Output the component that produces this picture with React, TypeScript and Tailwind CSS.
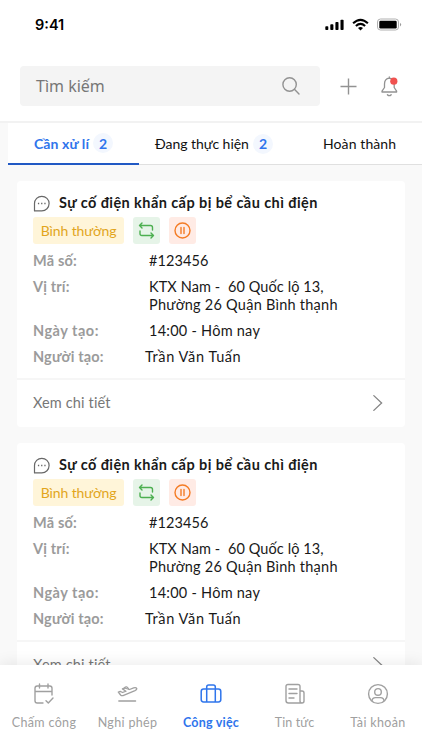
import type { ReactNode } from "react";

const tickets = [
  { id: "first", code: "#123456" },
  { id: "second", code: "#123456" },
];

const navItems = [
  { label: "Chấm công", icon: <CalendarIcon />, width: "w-[88px]", tracking: "tracking-[0.35px]" },
  { label: "Nghỉ phép", icon: <PlaneIcon />, width: "w-[79px]", tracking: "tracking-[0.35px]" },
  { label: "Công việc", icon: <WorkIcon />, width: "w-[88px]", tracking: "tracking-[0.2px]", active: true },
  { label: "Tin tức", icon: <NewsIcon />, width: "w-[79px]", tracking: "tracking-[0.1px]" },
  { label: "Tài khoản", icon: <UserIcon />, width: "w-[88px]", tracking: "tracking-[0.35px]" },
];

function CalendarIcon() {
  return (
    <svg width="20" height="22" viewBox="0 0 20 22" fill="none" stroke="currentColor" strokeWidth="1.4" strokeLinecap="round" strokeLinejoin="round">
      <path d="M9 20H3.2Q1 20 1 17.8V5.2Q1 3 3.2 3H15.8Q18 3 18 5.2V12M1 8.5H18M5.5 1V5M14 1V5M12 17.7L14.3 20L19 15" />
    </svg>
  );
}

function PlaneIcon() {
  return (
    <svg width="21" height="22" viewBox="0 0 21 22" fill="none" stroke="currentColor" strokeWidth="1.3" strokeLinecap="round" strokeLinejoin="round">
      <path d="M1.3 9L3.2 8.4L5.6 9.5L9 8.2L5.4 5.9L7.4 5L12.6 6.5L16.6 4.9Q19 4.2 19.8 5.5Q20 6.8 18 7.7L6 12.6Q4.6 13 3.6 12Z" />
      <path d="M7.4 5Q9.6 2.2 11.6 6M1.8 18H18.6" />
    </svg>
  );
}

function WorkIcon() {
  return (
    <svg width="22" height="22" viewBox="0 0 22 22" fill="none" stroke="currentColor" strokeWidth="1.5" strokeLinejoin="round">
      <rect x="1.2" y="6" width="19.6" height="13" rx="2.4" />
      <path d="M6.7 19V4Q6.7 2 8.7 2H13.3Q15.3 2 15.3 4V19" />
    </svg>
  );
}

function NewsIcon() {
  return (
    <svg width="20" height="22" viewBox="0 0 20 22" fill="none" stroke="currentColor" strokeWidth="1.4" strokeLinecap="round" strokeLinejoin="round">
      <path d="M15 8V3.5Q15 1.5 13 1.5H3Q1 1.5 1 3.5V17.5Q1 20 3.5 20H17Q19 20 19 18V10Q19 8 17 8H15V18Q15 20 17 20M4 6H12M4 10.5H12M4 15H9" />
    </svg>
  );
}

function UserIcon() {
  return (
    <svg width="22" height="22" viewBox="0 0 22 22" fill="none" stroke="currentColor" strokeWidth="1.4">
      <circle cx="11" cy="11" r="9.4" />
      <circle cx="11" cy="8.9" r="3.3" />
      <path d="M5 18Q5.2 14.6 8.5 14.6H13.5Q16.8 14.6 17 18" />
    </svg>
  );
}

function StatusBar() {
  return (
    <div className="flex h-[66px] items-start justify-between pt-4 pr-5 pl-[35px]">
      <span className="font-[Inter,sans-serif] text-[14.5px] leading-[18px] font-semibold text-black">9:41</span>
      <svg className="mt-0.5" width="77" height="14" viewBox="0 0 77 14">
        <rect x="0.3" y="8.3" width="3" height="3.7" rx="0.8" />
        <rect x="5.3" y="6.3" width="3.1" height="5.7" rx="0.8" />
        <rect x="10.4" y="4" width="3.1" height="8" rx="0.8" />
        <rect x="15.5" y="1.7" width="3.1" height="10.3" rx="0.8" />
        <g fill="none" stroke="black" strokeWidth="2.1">
          <path d="M28.1 5.3Q35.5 -1.6 42.9 5.3M30.9 8.1Q35.5 3.8 40.1 8.1" />
        </g>
        <path d="M33 10.1Q35.5 8 38 10.1L35.5 12.6Z" />
        <rect x="52.5" y="1" width="21" height="11" rx="3" fill="none" stroke="#b0b0b0" />
        <rect x="54.3" y="2.7" width="17.4" height="7.7" rx="1.2" />
        <path d="M75 4.7Q77.3 6.5 75 8.4Z" fill="#999" />
      </svg>
    </div>
  );
}

function Header() {
  return (
    <header className="flex h-[57px] items-start border-b-2 border-[#f2f2f2] pl-5">
      <div className="flex h-10 w-[300px] items-center justify-between rounded bg-[#f4f4f4] pr-[19px] pl-4">
        <span className="font-['Noto_Sans',sans-serif] text-[16px] text-[#777]">Tìm kiếm</span>
        <svg width="20" height="20" viewBox="0 0 20 20" fill="none" stroke="#929292" strokeWidth="1.4" strokeLinecap="round">
          <circle cx="8.6" cy="8.5" r="6.7" />
          <path d="M13.4 13.3L18 18" />
        </svg>
      </div>
      <svg className="mt-[11.5px] ml-5" width="17" height="17" viewBox="0 0 17 17" stroke="#929292" strokeWidth="1.4">
        <path d="M8.5 0.5V16.5M0.5 8.5H16.5" />
      </svg>
      <svg className="mt-2.5 ml-6" width="18" height="22" viewBox="0 0 18 22" fill="none" stroke="#929292" strokeWidth="1.3" strokeLinecap="round" strokeLinejoin="round">
        <path d="M8.3 1V2.2M8.3 2.2Q3.6 2.7 3.5 8V11.5L1 15.1V16H15.6V15.1L13.2 11.5V8Q13 2.7 8.3 2.2M6.4 18.7Q8.3 20.7 10.2 18.7" />
        <circle cx="12.8" cy="5.2" r="3.6" fill="#f05250" stroke="none" />
      </svg>
    </header>
  );
}

function Count({ children }: { children: ReactNode }) {
  return (
    <span className="flex size-5 items-center justify-center rounded-full bg-[#f3f7fe] text-[14px] font-bold text-[#2f75ec]">
      {children}
    </span>
  );
}

function Tabs() {
  return (
    <div className="ml-2 flex h-[42px] border-b border-[#e0e0e0] bg-white text-[14px] text-[#111]">
      <div className="flex h-[42px] w-[131px] shrink-0 items-center gap-1 border-b-2 border-[#2159c4] pl-[26px] font-bold text-[#2f75ec]">
        <span className="w-[55px] tracking-[0.1px] whitespace-nowrap">Cần xử lí</span>
        <Count>2</Count>
      </div>
      <div className="flex shrink-0 items-center gap-1 pl-4">
        <span className="w-[94px] tracking-[-0.05px] whitespace-nowrap">Đang thực hiện</span>
        <Count>2</Count>
      </div>
      <div className="flex items-center pl-[50px] tracking-[0.1px] whitespace-nowrap">Hoàn thành</div>
    </div>
  );
}

function Row({ label, children, labelClass = "", className = "pl-1" }: { label: string; children: ReactNode; labelClass?: string; className?: string }) {
  return (
    <div className="flex">
      <span className={`w-28 shrink-0 font-bold text-[#9b9b9b] ${labelClass}`}>{label}</span>
      <span className={className}>{children}</span>
    </div>
  );
}

function TicketCard({ code }: { code: string }) {
  return (
    <article className="h-[246px] shrink-0 overflow-hidden rounded bg-white text-[14.5px] leading-[18px] text-[#191919]">
      <div className="h-[197px] px-4 pt-[13px]">
        <div className="flex items-center gap-[9px]">
          <svg className="shrink-0" width="17" height="17" viewBox="0 0 17 17" fill="none" stroke="#686868" strokeWidth="1.2" strokeLinejoin="round">
            <path d="M1.5 15.9V8.6A7.3 7.3 0 1 1 8.8 15.9Z" />
            <path d="M4.9 8.6H6.2M8.1 8.6H9.4M11.3 8.6H12.6" strokeWidth="1.5" />
          </svg>
          <h2 className="text-[14.5px] font-bold tracking-[0.42px] whitespace-nowrap">Sự cố điện khẩn cấp bị bể cầu chì điện</h2>
        </div>
        <div className="mt-[5px] flex h-[27px] gap-[9px]">
          <span className="flex w-[91px] items-center justify-center rounded-[3px] bg-[#fff5d9] text-[14px] tracking-[-0.1px] whitespace-nowrap text-[#e2a51c]">Bình thường</span>
          <span className="flex w-[27px] items-center justify-center rounded-[3px] bg-[#e6f4e8]">
            <svg width="17" height="17" viewBox="0 0 17 17" fill="none" stroke="#4caf50" strokeWidth="1.4" strokeLinecap="round" strokeLinejoin="round">
              <path d="M4 1L1.5 3.5L4 6M1.5 3.5H12.5Q14.5 3.5 14.5 5.5V8M13 11L15.5 13.5L13 16M15.5 13.5H4Q2 13.5 2 11.5V9" />
            </svg>
          </span>
          <span className="flex w-[27px] items-center justify-center rounded-[3px] bg-[#ffebe5]">
            <svg width="17" height="17" viewBox="0 0 17 17" fill="none" stroke="#f47c25" strokeWidth="1.4" strokeLinecap="round">
              <circle cx="8.5" cy="8.5" r="7.5" />
              <path d="M7 5.5V11.5M10 5.5V11.5" />
            </svg>
          </span>
        </div>
        <div className="mt-2 flex flex-col gap-2">
          <Row label="Mã số:" labelClass="tracking-[0.2px]" className="pl-1 tracking-[0.1px]">{code}</Row>
          <Row label="Vị trí:" labelClass="tracking-[0.15px]">
            <span className="block tracking-[0.1px] whitespace-pre">KTX Nam -  60 Quốc lộ 13,</span>
            <span className="block tracking-[0.25px] whitespace-nowrap">Phường 26 Quận Bình thạnh</span>
          </Row>
          <Row label="Ngày tạo:" labelClass="tracking-[0.5px]" className="pl-1 tracking-[0.25px]">14:00 - Hôm nay</Row>
          <Row label="Người tạo:" labelClass="tracking-[0.15px]" className="tracking-[0.6px]">Trần Văn Tuấn</Row>
        </div>
      </div>
      <div className="flex h-[49px] items-center justify-between border-t-2 border-[#f6f6f6] pr-[22px] pb-0.5 pl-4 text-[#777]">
        <span className="tracking-[0.15px]">Xem chi tiết</span>
        <svg width="11" height="18" viewBox="0 0 11 18" fill="none" stroke="#858585" strokeWidth="1.3" strokeLinecap="round">
          <path d="M1.8 1.6L9.6 9L1.8 16.4" />
        </svg>
      </div>
    </article>
  );
}

function BottomNav() {
  return (
    <nav className="relative flex h-[85px] shrink-0 bg-white shadow-[0_-2px_14px_rgba(0,0,0,0.08)]">
      {navItems.map((item) => (
        <div
          key={item.label}
          className={`flex shrink-0 flex-col items-center pt-[18px] text-[12.5px] leading-[18px] whitespace-nowrap ${item.width} ${item.tracking} ${item.active ? "font-bold text-[#2f75ec]" : "text-[#a0a0a0]"}`}
        >
          {item.icon}
          <span className="mt-[9px]">{item.label}</span>
        </div>
      ))}
    </nav>
  );
}

export default function App() {
  return (
    <div className="flex h-[750px] w-[422px] flex-col overflow-hidden bg-[#f9f9f9] font-[Lato,sans-serif]">
      <div className="shrink-0 bg-white">
        <StatusBar />
        <Header />
      </div>
      <Tabs />
      <main className="flex min-h-0 flex-1 flex-col gap-4 overflow-hidden px-[17px] pt-4">
        {tickets.map((ticket) => (
          <TicketCard key={ticket.id} code={ticket.code} />
        ))}
      </main>
      <BottomNav />
    </div>
  );
}
